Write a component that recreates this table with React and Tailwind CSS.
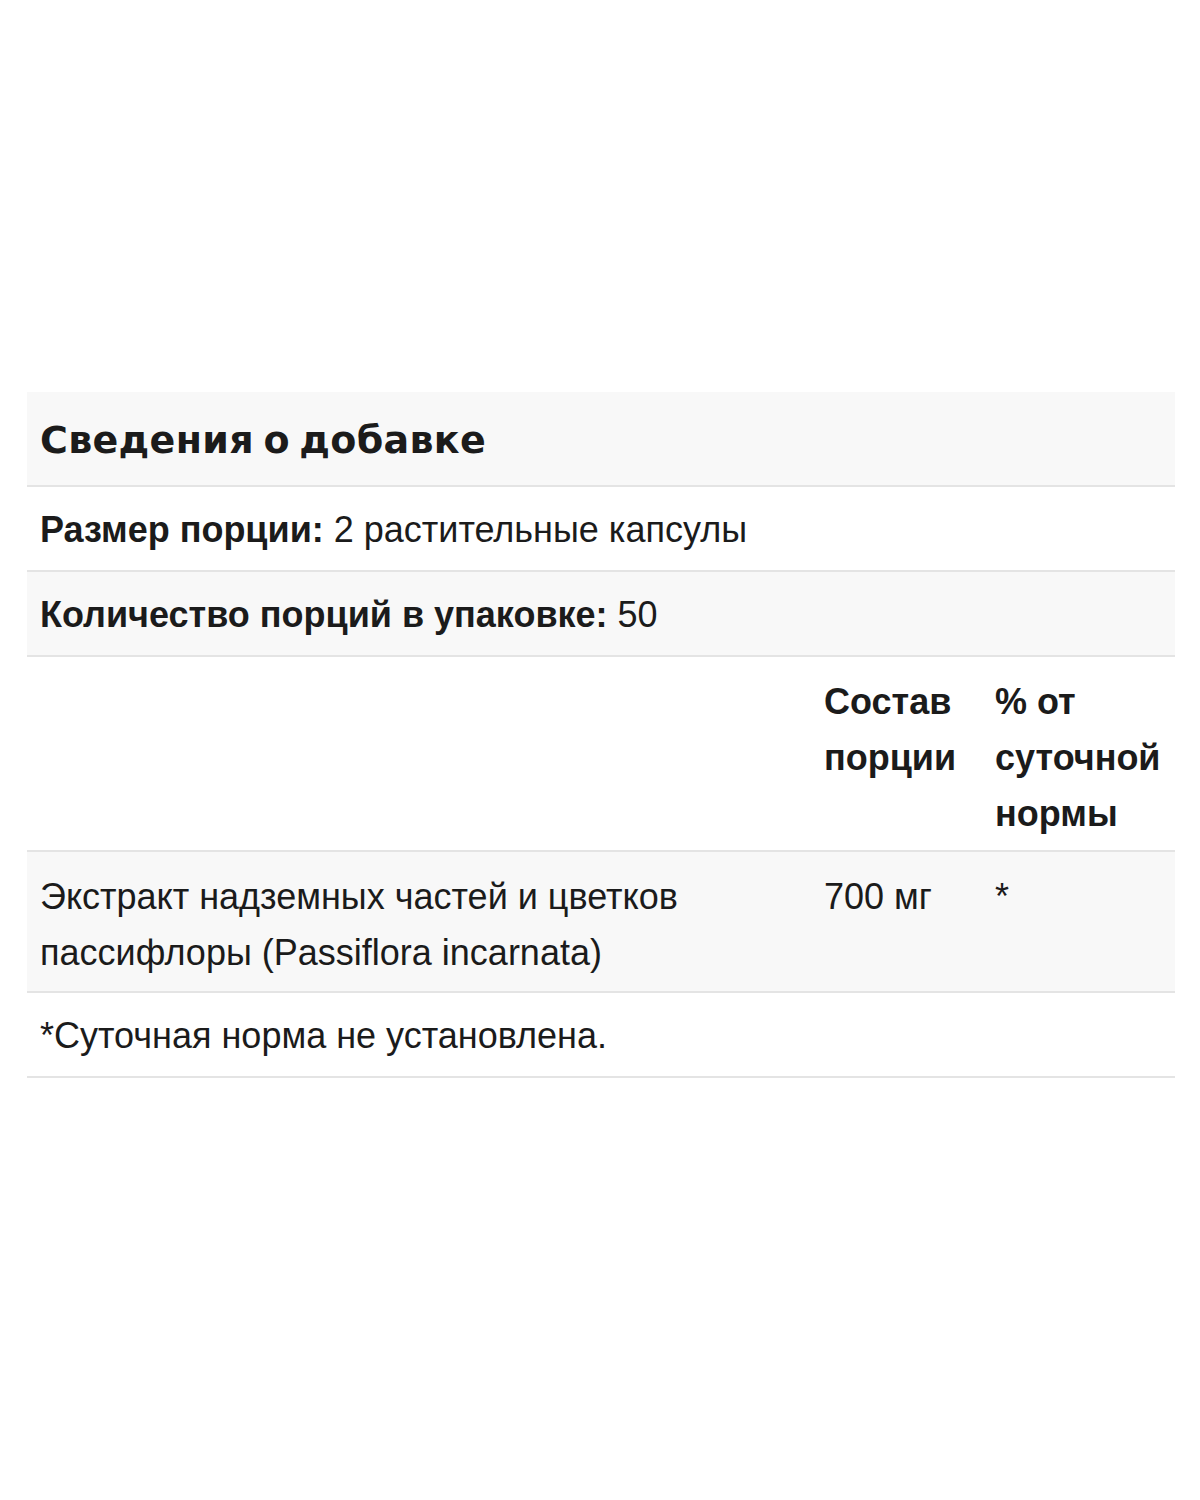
export default function App() {
  const font = { fontFamily: '"Liberation Sans", Arial, sans-serif' };
  return (
    <div className="w-[1200px] h-[1500px] bg-white pt-[392px] px-[27px] text-[#1b1b1b]" style={font}>
      <div className="w-[1148px]">
        <div className="bg-[#f8f8f8] h-[95px] flex items-center px-[13px] pt-[4px] border-b-2 border-[#e4e4e4]">
          <h2 className="text-[38px] font-bold font-['DejaVu_Sans',sans-serif] tracking-[0.3px] [word-spacing:-4px]">Сведения о добавке</h2>
        </div>
        <div className="h-[85px] flex items-center px-[13px] pt-[3px] border-b-2 border-[#e4e4e4] text-[36px]">
          <span><b>Размер порции:</b> 2 растительные капсулы</span>
        </div>
        <div className="bg-[#f8f8f8] h-[85px] flex items-center px-[13px] pt-[3px] border-b-2 border-[#e4e4e4] text-[36px]">
          <span><b>Количество порций в упаковке:</b> 50</span>
        </div>
        <div className="grid grid-cols-[784px_171px_193px] border-b-2 border-[#e4e4e4] text-[36px] leading-[56px] pt-[17px] pb-[8px]">
          <div></div>
          <div className="px-[13px] font-bold">Состав порции</div>
          <div className="px-[13px] font-bold">% от суточной нормы</div>
        </div>
        <div className="grid grid-cols-[784px_171px_193px] bg-[#f8f8f8] border-b-2 border-[#e4e4e4] text-[36px] leading-[56px] pt-[17px] pb-[10px]">
          <div className="px-[13px]">Экстракт надземных частей и цветков пассифлоры (Passiflora incarnata)</div>
          <div className="px-[13px]">700 мг</div>
          <div className="px-[13px]">*</div>
        </div>
        <div className="h-[85px] flex items-center px-[13px] pt-[3px] border-b-2 border-[#e4e4e4] text-[36px]">
          <span>*Суточная норма не установлена.</span>
        </div>
      </div>
    </div>
  );
}
